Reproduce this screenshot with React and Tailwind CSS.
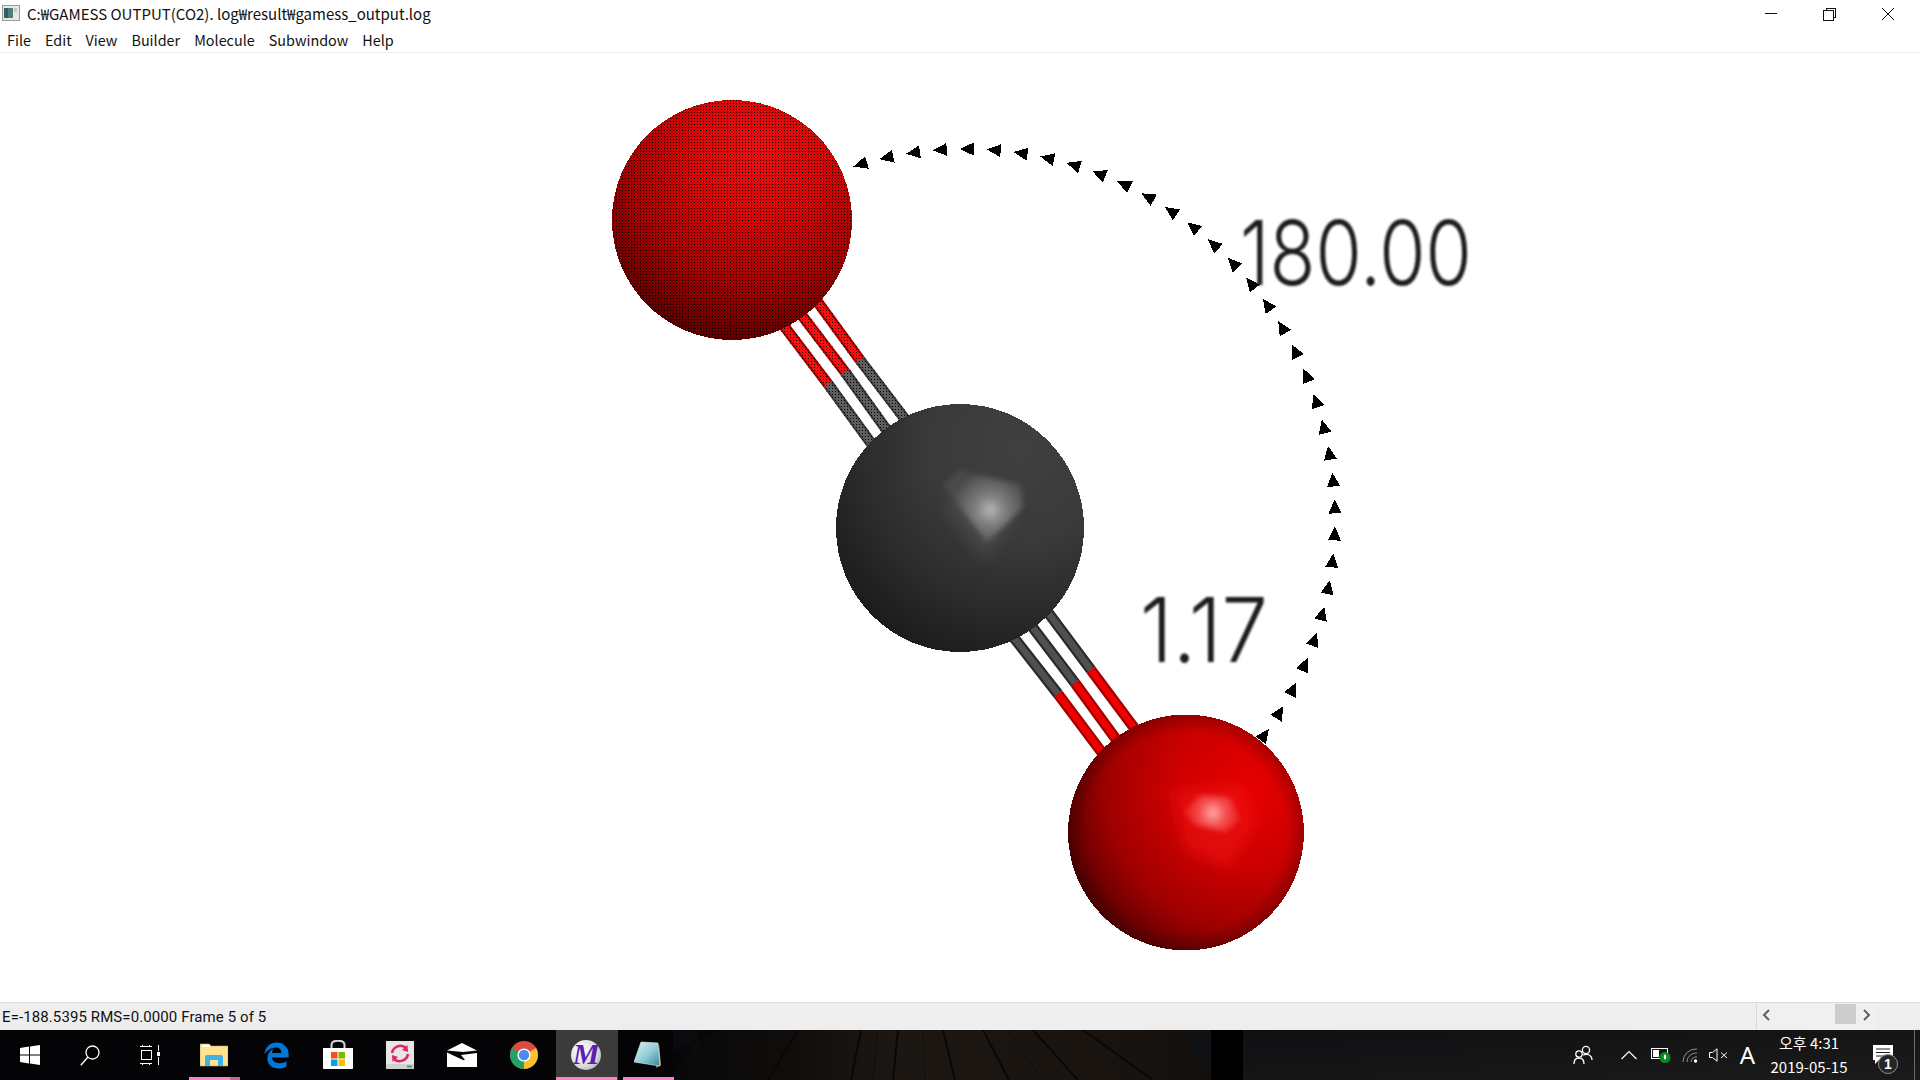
import React from "react";
import { FaEdgeLegacy } from "react-icons/fa6";

const MENU = ["File", "Edit", "View", "Builder", "Molecule", "Subwindow", "Help"];

const ARROW_CX = 966, ARROW_CY = 518, ARROW_R = 369;
const arrows = Array.from({ length: 35 }, (_, i) => {
  const deg = -106.5 + (i * 142.6) / 34;
  const t = (deg * Math.PI) / 180;
  const x = ARROW_CX + ARROW_R * Math.cos(t);
  const y = ARROW_CY + ARROW_R * Math.sin(t);
  const dx = Math.sin(t), dy = -Math.cos(t);
  const nx = -dy, ny = dx;
  const pts = [
    [x + dx * 8, y + dy * 8],
    [x - dx * 6 + nx * 6.5, y - dy * 6 + ny * 6.5],
    [x - dx * 6 - nx * 6.5, y - dy * 6 - ny * 6.5],
  ];
  return pts.map((p) => p.map((v) => v.toFixed(1)).join(",")).join(" ");
});

const TOP_BONDS = [
  [[781, 322], [828, 384], [876, 450]],
  [[797, 309], [845, 372], [891, 436]],
  [[814, 297], [860, 360], [908, 423]],
];
const BOTTOM_BONDS = [
  [[1011, 634], [1058, 694], [1106, 758]],
  [[1027, 620], [1075, 683], [1121, 746]],
  [[1044, 607], [1091, 670], [1138, 733]],
];

function Seg({ a, b, dark, light, dots }) {
  return (
    <g>
      <line x1={a[0]} y1={a[1]} x2={b[0]} y2={b[1]} stroke={dark} strokeWidth="11" />
      <line x1={a[0]} y1={a[1]} x2={b[0]} y2={b[1]} stroke={light} strokeWidth="6.5" />
      {dots && <line x1={a[0]} y1={a[1]} x2={b[0]} y2={b[1]} stroke="url(#dots)" strokeWidth="11" />}
    </g>
  );
}

function Molecule() {
  return (
    <svg viewBox="0 53 1920 949" className="absolute inset-0 w-full h-full">
      <defs>
        <pattern id="dots" width="3" height="3" patternUnits="userSpaceOnUse">
          <rect x="1" y="1" width="1" height="1" fill="#000" />
        </pattern>
        <radialGradient id="o1" gradientUnits="userSpaceOnUse" cx="757" cy="150" r="225">
          <stop offset="0" stopColor="#e81010" />
          <stop offset="0.3" stopColor="#d40808" />
          <stop offset="0.6" stopColor="#a00202" />
          <stop offset="0.85" stopColor="#5c0000" />
          <stop offset="1" stopColor="#300000" />
        </radialGradient>
        <radialGradient id="c1" gradientUnits="userSpaceOnUse" cx="1020" cy="450" r="260">
          <stop offset="0" stopColor="#404040" />
          <stop offset="0.35" stopColor="#3a3a3a" />
          <stop offset="0.6" stopColor="#2c2c2c" />
          <stop offset="0.85" stopColor="#1c1c1c" />
          <stop offset="1" stopColor="#101010" />
        </radialGradient>
        <radialGradient id="o2" gradientUnits="userSpaceOnUse" cx="1247" cy="790" r="215">
          <stop offset="0" stopColor="#e80000" />
          <stop offset="0.35" stopColor="#cc0000" />
          <stop offset="0.65" stopColor="#a00000" />
          <stop offset="0.85" stopColor="#620000" />
          <stop offset="1" stopColor="#300000" />
        </radialGradient>
        <radialGradient id="rim" gradientUnits="userSpaceOnUse" cx="1186" cy="832.5" r="118">
          <stop offset="0.85" stopColor="#000" stopOpacity="0" />
          <stop offset="1" stopColor="#000" stopOpacity="0.22" />
        </radialGradient>
        <radialGradient id="hc" gradientUnits="userSpaceOnUse" cx="990" cy="510" r="40">
          <stop offset="0" stopColor="#b8b8b8" />
          <stop offset="0.35" stopColor="#808080" />
          <stop offset="1" stopColor="#484848" />
        </radialGradient>
        <radialGradient id="ho" gradientUnits="userSpaceOnUse" cx="1213" cy="813" r="28">
          <stop offset="0" stopColor="#ffaaaa" />
          <stop offset="0.45" stopColor="#f45050" />
          <stop offset="1" stopColor="#ee1818" />
        </radialGradient>
        <filter id="b1" x="-30%" y="-30%" width="160%" height="160%"><feGaussianBlur stdDeviation="2.5" /></filter>
        <filter id="b2" x="-30%" y="-30%" width="160%" height="160%"><feGaussianBlur stdDeviation="7" /></filter>
        <filter id="bt" x="-10%" y="-10%" width="120%" height="120%"><feGaussianBlur stdDeviation="1.1" /></filter>
      </defs>

      <g fill="#000" shapeRendering="crispEdges">
        {arrows.map((p, i) => <polygon key={i} points={p} />)}
      </g>

      {TOP_BONDS.map((b, i) => (
        <g key={i}>
          <Seg a={b[0]} b={b[1]} dark="#a80000" light="#f81010" dots />
          <Seg a={b[1]} b={b[2]} dark="#3a3a3a" light="#606060" dots />
        </g>
      ))}
      {BOTTOM_BONDS.map((b, i) => (
        <g key={i}>
          <Seg a={b[0]} b={b[1]} dark="#2a2a2a" light="#505050" />
          <Seg a={b[1]} b={b[2]} dark="#a00000" light="#ee0000" />
        </g>
      ))}

      <g shapeRendering="crispEdges">
        <circle cx="732" cy="220" r="120" fill="url(#o1)" />
        <circle cx="732" cy="220" r="120" fill="url(#dots)" />
      </g>

      <circle cx="960" cy="528" r="124" fill="url(#c1)" shapeRendering="crispEdges" />
      <polygon points="955,480 948,510 985,560 1015,520" fill="#555" opacity="0.5" filter="url(#b2)" />
      <polygon points="960,470 943,485 987,542 1023,508 1022,485" fill="url(#hc)" filter="url(#b1)" />

      <circle cx="1186" cy="832.5" r="118" fill="url(#o2)" shapeRendering="crispEdges" />
      <circle cx="1186" cy="832.5" r="118" fill="url(#rim)" shapeRendering="crispEdges" />
      <polygon points="1172,790 1240,785 1258,820 1230,868 1185,850" fill="#f01818" opacity="0.5" filter="url(#b2)" />
      <polygon points="1183,812 1200,795 1230,797 1241,820 1225,832 1195,825" fill="url(#ho)" filter="url(#b1)" />

      <g filter="url(#bt)" fill="#1a1a1a">
        <text x="1240" y="285" fontSize="90" textLength="232" lengthAdjust="spacingAndGlyphs" fontFamily="Inter, 'Liberation Sans', sans-serif" fontWeight="300">180.00</text>
        <text x="1140" y="662" fontSize="90" textLength="128" lengthAdjust="spacingAndGlyphs" fontFamily="Inter, 'Liberation Sans', sans-serif" fontWeight="300">1.17</text>
      </g>
    </svg>
  );
}

function TitleIcon() {
  return (
    <svg width="18" height="16" viewBox="0 0 18 16" className="shrink-0">
      <rect x="0.5" y="0.5" width="17" height="15" fill="#e8e8e8" stroke="#9a9a9a" />
      <rect x="2" y="3" width="9" height="10" fill="#4d7f7a" />
      <rect x="2" y="3" width="4" height="10" fill="#2f5f6a" />
      <rect x="12" y="3" width="3" height="4" fill="#c8c8c8" />
    </svg>
  );
}

function WinControls() {
  return (
    <div className="flex items-center h-full">
      <svg width="174" height="26" viewBox="0 0 174 26" fill="none" stroke="#111" strokeWidth="1" shapeRendering="crispEdges">
        <line x1="19" y1="13.5" x2="31" y2="13.5" />
        <rect x="77.5" y="10.5" width="9.5" height="9.5" />
        <path d="M80 10.5 V8.5 H89.5 V17.5 H87" />
        <path d="M136 8 L148 20 M148 8 L136 20" shapeRendering="auto" />
      </svg>
    </div>
  );
}

function Slot({ children, underline, active, split }) {
  return (
    <div className={`relative w-[62px] h-full flex items-center justify-center shrink-0 pr-[2px] ${active ? "bg-[#3b3b3b]" : ""}`}>
      {children}
      {underline && (
        <div className={`absolute bottom-0 h-[3px] bg-[#ff80c0] ${active ? "left-0 right-[1px]" : "left-[5px] right-[6px]"}`} />
      )}
      {split && <div className="absolute bottom-0 h-[3px] right-[6px] w-[10px] bg-[#c4689a]" />}
    </div>
  );
}

function Taskbar() {
  return (
    <div className="relative h-[50px] shrink-0 bg-[#040406] overflow-hidden">
      <div className="absolute inset-0 flex">
        <div className="w-[673px] shrink-0 bg-[#040406]" />
        <svg width="538" height="50" viewBox="0 0 538 50" className="shrink-0">
          <defs>
            <linearGradient id="woodfade" x1="0" x2="1" y1="0" y2="0">
              <stop offset="0" stopColor="#08080a" />
              <stop offset="0.22" stopColor="#100d0b" />
              <stop offset="0.4" stopColor="#1c1713" />
              <stop offset="0.85" stopColor="#18130f" />
              <stop offset="1" stopColor="#120f0d" />
            </linearGradient>
          </defs>
          <rect width="538" height="50" fill="url(#woodfade)" />
          <rect x="0" width="26" height="20" fill="#0a0b0e" />
          <path d="M125 0 L95 50 M188 0 L178 50 M225 0 L220 50 M270 0 L282 50 M310 0 L336 50 M360 0 L405 50 M410 0 L480 50" stroke="#0a0807" strokeWidth="2" fill="none" />
          <path d="M150 0 L130 50 M205 0 L200 50 M250 0 L252 50 M335 0 L370 50" stroke="#120f0c" strokeWidth="1" fill="none" />
          <polygon points="0,50 0,20 50,0 30,0" fill="#040406" opacity="0.4" />
          <polygon points="510,0 538,0 538,50" fill="#101114" />
        </svg>
        <div className="w-[32px] shrink-0 bg-black" />
        <div className="flex-1 bg-gradient-to-br from-[#0f1012] to-[#1b1b1b]" />
      </div>

      <div className="relative flex items-center h-full">
        <div className="w-[60px] h-full flex items-center justify-center shrink-0">
          <svg width="20" height="20" viewBox="0 0 20 20" fill="#fff">
            <path d="M0 3 L9 1.6 V9.4 H0 Z M10 1.4 L20 0 V9.4 H10 Z M0 10.5 H9 V18.4 L0 17 Z M10 10.5 H20 V20 L10 18.6 Z" />
          </svg>
        </div>
        <div className="w-[60px] h-full flex items-center justify-center shrink-0">
          <svg width="20" height="21" viewBox="0 0 20 21" fill="none" stroke="#fff" strokeWidth="1.3">
            <circle cx="12.5" cy="7.5" r="6.5" />
            <path d="M7.8 12.2 L0.8 20.2" />
          </svg>
        </div>
        <div className="w-[60px] h-full flex items-center justify-center shrink-0">
          <svg width="20" height="20" viewBox="0 0 20 20" fill="none" stroke="#fff" strokeWidth="1" shapeRendering="crispEdges">
            <path d="M0 1.5 H12 M2.5 0 V1.5 M9.5 0 V1.5" />
            <rect x="1.5" y="5.5" width="10" height="9" />
            <path d="M0 18.5 H12 M2.5 18.5 V20 M9.5 18.5 V20" />
            <path d="M18.5 0 V6 M18.5 12 V20" />
            <rect x="17" y="7.5" width="3" height="3" fill="#fff" />
          </svg>
        </div>
        <div className="w-[4px] shrink-0" />

        <Slot underline split>
          <svg width="28" height="24" viewBox="0 0 28 24">
            <path d="M0 1 H9 L11 3 H28 V23 H0 Z" fill="#ffe38f" stroke="#c9a858" strokeWidth="0.6" />
            <rect x="2" y="1.6" width="8" height="2.4" fill="#fff" />
            <path d="M5 23 V14 Q5 12 7 12 H21 Q23 12 23 14 V23 H18 V17 H10 V23 Z" fill="#3fb2e6" />
          </svg>
        </Slot>
        <Slot>
          <FaEdgeLegacy size={27} color="#0078d7" />
        </Slot>
        <Slot>
          <svg width="32" height="30" viewBox="0 0 32 30">
            <path d="M9.5 9 V5 Q9.5 0.8 16 0.8 Q22.5 0.8 22.5 5 V9" fill="none" stroke="#d9d9d9" strokeWidth="2" />
            <path d="M1 8 H31 V28 Q31 29 30 29 H2 Q1 29 1 28 Z" fill="#fff" />
            <rect x="9" y="12" width="6.5" height="6.5" fill="#f25022" />
            <rect x="16.5" y="12" width="6.5" height="6.5" fill="#7fba00" />
            <rect x="9" y="19.5" width="6.5" height="6.5" fill="#00a4ef" />
            <rect x="16.5" y="19.5" width="6.5" height="6.5" fill="#ffb900" />
          </svg>
        </Slot>
        <Slot>
          <svg width="28" height="28" viewBox="0 0 28 28">
            <rect width="28" height="28" fill="#e6e6e6" />
            <rect y="23" width="28" height="5" fill="#d0d0d0" />
            <rect x="21" y="24.5" width="5" height="2" fill="#4f9e5c" />
            <path d="M6 12 A8.5 8.5 0 0 1 20 7" fill="none" stroke="#e0265c" strokeWidth="2.6" />
            <path d="M22 11 L16 9 L21.5 4 Z" fill="#e0265c" />
            <path d="M22 13 A8.5 8.5 0 0 1 8 18" fill="none" stroke="#e0265c" strokeWidth="2.6" />
            <path d="M6 14 L12 16 L6.5 21 Z" fill="#e0265c" />
          </svg>
        </Slot>
        <Slot>
          <svg width="30" height="24" viewBox="0 0 30 24" fill="#fff">
            <path d="M15 0 L30 7.5 L16 9 L0 7.5 Z" />
            <path d="M0 9.5 L16 17 L18 17 L14 12 L30 10 V24 H0 Z" />
          </svg>
        </Slot>
        <Slot>
          <svg width="28" height="28" viewBox="0 0 28 28">
            <circle cx="14" cy="14" r="14" fill="#db4b3f" />
            <path d="M14 14 L26.1 7 A14 14 0 0 1 14 28 Z" fill="#fbc02d" />
            <path d="M14 14 L14 28 A14 14 0 0 1 1.9 7 Z" fill="#1fa463" />
            <circle cx="14" cy="14" r="6.6" fill="#fff" />
            <circle cx="14" cy="14" r="5.2" fill="#4c8bf5" />
          </svg>
        </Slot>
        <Slot active underline>
          <div className="relative w-[30px] h-[30px] rounded-full bg-[radial-gradient(circle_at_35%_35%,#ffffff,#d8d8d8_60%,#8e8e8e)] flex items-center justify-center">
            <span className="[font-family:'Liberation_Serif',serif] italic font-bold text-[30px] leading-none text-[#5a1fb0] -mt-[2px]">M</span>
          </div>
        </Slot>
        <Slot underline>
          <svg width="28" height="28" viewBox="0 0 28 28">
            <defs>
              <linearGradient id="np" x1="0" y1="0" x2="1" y2="1">
                <stop offset="0" stopColor="#dff3f5" />
                <stop offset="0.55" stopColor="#8ccad6" />
                <stop offset="1" stopColor="#2f86a0" />
              </linearGradient>
            </defs>
            <path d="M25 2 L27 24 L22 27 Z" fill="#b08a4a" />
            <path d="M7 1 L24 2 L26 25 L0 21 Z" fill="url(#np)" stroke="#e8f2f4" strokeWidth="0.6" />
          </svg>
        </Slot>

        <div className="flex-1" />

        <div className="flex items-center h-full text-white shrink-0">
          <svg width="20" height="20" viewBox="0 0 20 20" fill="none" stroke="#fff" strokeWidth="1.3" className="mr-[28px]">
            <circle cx="13" cy="5" r="3.6" />
            <circle cx="6" cy="9" r="3.2" />
            <path d="M1 19 Q1 13 6 13 Q11 13 11 19" />
            <path d="M10 10 Q13 9 15 9.5 Q19 11 19 15" />
          </svg>
          <svg width="16" height="10" viewBox="0 0 16 10" fill="none" stroke="#fff" strokeWidth="1.2" className="mr-[14px]">
            <path d="M0.5 9 L8 1.5 L15.5 9" />
          </svg>
          <svg width="20" height="16" viewBox="0 0 20 16" className="mr-[11px]">
            <rect x="0.5" y="1.5" width="16" height="10" fill="none" stroke="#fff" />
            <rect x="2" y="3" width="6" height="7" fill="#fff" />
            <circle cx="14" cy="10.5" r="5.5" fill="#0a8a1e" />
            <path d="M14 7 Q16.5 10 14 13 Q11.5 10 14 7 Z" fill="#fff" />
          </svg>
          <svg width="16" height="15" viewBox="0 0 16 15" fill="none" stroke="#8f8f8f" strokeWidth="1" className="mr-[11px]">
            <path d="M1 14 A13 13 0 0 1 15 1" />
            <path d="M5 14 A9 9 0 0 1 15 5" />
            <path d="M9 14 A5 5 0 0 1 15 9" />
            <circle cx="13.5" cy="13" r="1.7" fill="#fff" stroke="none" />
          </svg>
          <svg width="19" height="14" viewBox="0 0 19 14" fill="none" stroke="#fff" strokeWidth="1" className="mr-[11px]">
            <path d="M0.5 4.5 H3.5 L8 0.8 V13.2 L3.5 9.5 H0.5 Z" />
            <path d="M12 4.5 L18 10 M18 4.5 L12 10" />
          </svg>
          <span className="[font-family:'Noto_Sans',sans-serif] text-[24px] leading-none w-[17px] text-center mr-[14px]">A</span>
          <div className="flex flex-col items-center w-[78px] [font-family:'Noto_Sans_CJK_KR','Noto_Sans',sans-serif] text-[15px] leading-[24px] -mt-[1px]">
            <span className="whitespace-nowrap">오후 4:31</span>
            <span className="whitespace-nowrap">2019-05-15</span>
          </div>
          <div className="relative w-[72px] h-full">
            <svg width="20" height="19" viewBox="0 0 20 19" className="absolute left-[25px] top-[15px]" fill="#fff">
              <path d="M0 0 H20 V15 H6 L2 19 V15 H0 Z" />
              <path d="M3 4 H17 M3 7.5 H17 M3 11 H15" stroke="#222" strokeWidth="1" />
            </svg>
            <div className="absolute left-[30px] top-[24px] w-[20px] h-[20px] rounded-full bg-[#262626] border border-[#8d8d8d] flex items-center justify-center text-[14px] font-bold leading-none [font-family:'Liberation_Sans',sans-serif]">1</div>
            <div className="absolute right-[5px] top-0 bottom-0 w-[1px] bg-[#6a6a6a]" />
          </div>
        </div>
      </div>
    </div>
  );
}

export default function App() {
  return (
    <div className="w-[1920px] h-[1080px] flex flex-col bg-white overflow-hidden [font-family:'Noto_Sans','Noto_Sans_CJK_KR',sans-serif] text-[#111]">
      <div className="h-[26px] flex items-center justify-between shrink-0">
        <div className="flex items-center pl-[2px] gap-[7px]">
          <TitleIcon />
          <span className="text-[15px] leading-none pt-[1px] [font-family:'Noto_Sans_CJK_KR','Noto_Sans',sans-serif] whitespace-nowrap">C:₩GAMESS OUTPUT(CO2). log₩result₩gamess_output.log</span>
        </div>
        <WinControls />
      </div>
      <div className="h-[27px] flex items-center gap-[14px] pl-[7px] pt-[2px] border-b border-[#f0f0f0] shrink-0 text-[14.4px] leading-none [font-family:'Noto_Sans_CJK_KR','Noto_Sans',sans-serif]">
        {MENU.map((m) => <span key={m}>{m}</span>)}
      </div>
      <div className="relative flex-1 min-h-0">
        <Molecule />
      </div>
      <div className="h-[28px] shrink-0 flex bg-[#eeeeee] border-t border-[#d9d9d9]">
        <div className="flex-1 pl-[2px] pt-[2px] flex items-center text-[15px] tracking-[0.1px] leading-none [font-family:'Roboto',sans-serif] whitespace-nowrap">
          E=-188.5395 RMS=0.0000 Frame 5 of 5
        </div>
        <div className="w-[120px] h-[26px] mt-[1px] border-l border-[#d9d9d9] bg-[#f0f0f0] relative mr-[44px] flex">
          <svg width="10" height="12" viewBox="0 0 10 12" fill="none" stroke="#606060" strokeWidth="2" className="absolute left-[5px] top-[5px]"><path d="M7 1 L2 6 L7 11" /></svg>
          <div className="absolute left-[78px] top-0 w-[21px] h-[20px] bg-[#cdcdcd]" />
          <svg width="10" height="12" viewBox="0 0 10 12" fill="none" stroke="#606060" strokeWidth="2" className="absolute left-[104px] top-[5px]"><path d="M3 1 L8 6 L3 11" /></svg>
        </div>
      </div>
      <Taskbar />
    </div>
  );
}
